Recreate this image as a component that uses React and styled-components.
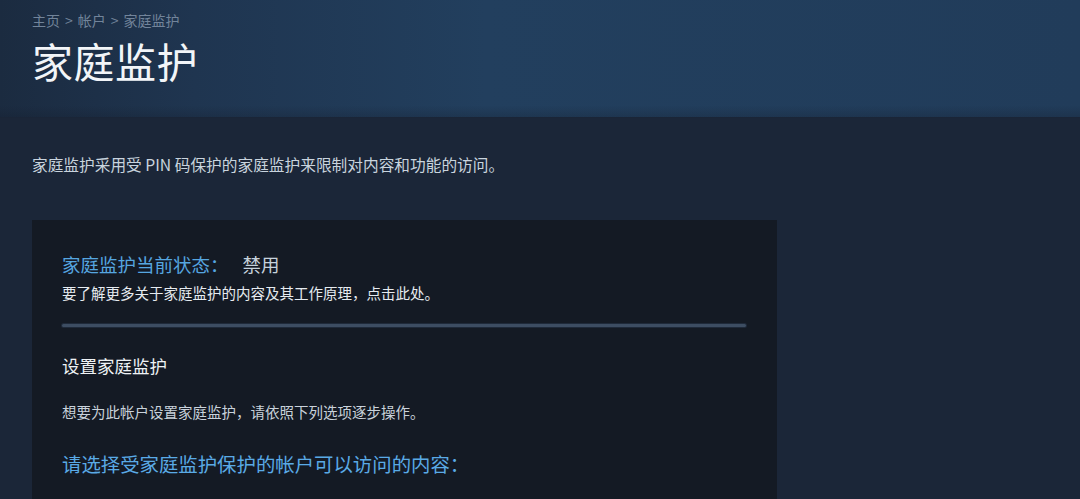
import React from 'react';
import styled, { createGlobalStyle } from 'styled-components';

const GlobalStyle = createGlobalStyle`
  html, body {
    margin: 0;
    padding: 0;
    background: #1b2638;
    font-family: "Noto Sans CJK SC", "Noto Sans", Arial, sans-serif;
    overflow: hidden;
  }
`;

const Page = styled.div`
  width: 1080px;
  min-height: 499px;
  background: #1b2638;
`;

const Header = styled.div`
  height: 118px;
  box-sizing: border-box;
  padding: 11px 32px 0;
  background:
    linear-gradient(to bottom, rgba(0,0,0,0) 90%, rgba(18,26,40,.25) 100%),
    linear-gradient(to right, #1b2b40 0%, #1f3550 18%, #223f5e 45%, #213c5a 100%);
  border-bottom: 1px solid #1a2537;
`;

const Breadcrumb = styled.div`
  font-size: 14px;
  line-height: 18px;
  color: #72849a;
`;

const Sep = styled.span`
  margin: 0 5px;
`;

const Title = styled.h1`
  margin: 7px 0 0;
  font-size: 41px;
  line-height: 48px;
  font-weight: 400;
  color: #f2f5f8;
  letter-spacing: 0.5px;
`;

const Body = styled.div`
  padding: 0 32px;
`;

const Intro = styled.p`
  margin: 36px 0 0;
  font-size: 15.7px;
  line-height: 22px;
  color: #c9d4de;
`;

const Panel = styled.div`
  width: 745px;
  box-sizing: border-box;
  margin-top: 44px;
  padding: 31px 31px 40px 30px;
  background: #141a24;
  min-height: 300px;
`;

const Status = styled.div`
  font-size: 18.5px;
  line-height: 26px;
  color: #56a6e0;
`;

const StatusValue = styled.span`
  color: #c6d2dc;
  margin-left: 14px;
`;

const Small = styled.div`
  margin-top: ${p => p.$gap || 0}px;
  font-size: 14.5px;
  line-height: 20px;
  color: ${p => p.$bright ? '#e6ebf0' : '#c9d2db'};
`;

const Divider = styled.div`
  height: 3px;
  margin-top: 21px;
  border-radius: 2px;
  background: #3d4d62;
  box-shadow: 0 0 0 1px #1f2a3a;
`;

const Heading = styled.div`
  margin-top: 27px;
  font-size: 17.5px;
  line-height: 24px;
  color: #eef2f5;
`;

const Question = styled.div`
  margin-top: 28px;
  font-size: 19.4px;
  line-height: 28px;
  color: #5aaae6;
`;

export default function App() {
  return (
    <Page>
      <GlobalStyle />
      <Header>
        <Breadcrumb>
          主页<Sep>&gt;</Sep>帐户<Sep>&gt;</Sep>家庭监护
        </Breadcrumb>
        <Title>家庭监护</Title>
      </Header>
      <Body>
        <Intro>家庭监护采用受 PIN 码保护的家庭监护来限制对内容和功能的访问。</Intro>
        <Panel>
          <Status>
            家庭监护当前状态：<StatusValue>禁用</StatusValue>
          </Status>
          <Small $gap={6} $bright>要了解更多关于家庭监护的内容及其工作原理，点击此处。</Small>
          <Divider />
          <Heading>设置家庭监护</Heading>
          <Small $gap={24}>想要为此帐户设置家庭监护，请依照下列选项逐步操作。</Small>
          <Question>请选择受家庭监护保护的帐户可以访问的内容：</Question>
        </Panel>
      </Body>
    </Page>
  );
}
